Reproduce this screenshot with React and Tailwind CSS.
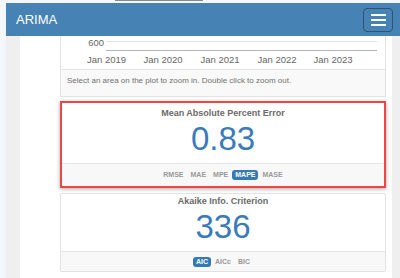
import { useState } from "react";

const years = [
  { x: 45.5, label: "Jan 2019" },
  { x: 102, label: "Jan 2020" },
  { x: 159, label: "Jan 2021" },
  { x: 216, label: "Jan 2022" },
  { x: 272, label: "Jan 2023" },
];

function Toggle({ items, active, onPick }) {
  return (
    <div className="flex items-center justify-center gap-[1px]">
      {items.map((it) => (
        <button
          key={it}
          onClick={() => onPick(it)}
          className={
            it === active
              ? "h-[10px] rounded-[3px] bg-[#337ab7] px-[3px] text-[7px] font-bold leading-[10px] text-white"
              : "h-[10px] rounded-[3px] px-[3px] text-[7px] font-bold leading-[10px] text-[#999]"
          }
        >
          {it}
        </button>
      ))}
    </div>
  );
}

function StatCard({ title, value, items, active, onPick, highlight }) {
  return (
    <div
      className={
        highlight
          ? "flex flex-col border-2 border-[#f04545] bg-white shadow-[0_1px_4px_rgba(0,0,0,0.35)]"
          : "flex flex-col rounded-[2px] border border-[#e2e2e2] bg-white"
      }
    >
      <div className={highlight ? "pt-[5px] text-center" : "pt-[2px] text-center"}>
        <div className="text-[9px] font-bold leading-[10px] text-[#6a6a6a]">{title}</div>
        <div className="text-[33px] leading-[42px] text-[#3a7cbb]">{value}</div>
      </div>
      <div
        className={
          highlight
            ? "mt-[3px] flex h-[23px] items-center justify-center border-t border-[#e6e6e6] bg-[#f8f8f8]"
            : "mt-[3px] flex h-[20px] items-center justify-center border-t border-[#e6e6e6] bg-[#f8f8f8]"
        }
      >
        <Toggle items={items} active={active} onPick={onPick} />
      </div>
    </div>
  );
}

export default function App() {
  const [err, setErr] = useState("MAPE");
  const [ic, setIc] = useState("AIC");

  return (
    <div
      className="flex h-[278px] w-[400px] overflow-hidden bg-[#f3f6fa]"
      style={{ fontFamily: '"Liberation Sans", Arial, sans-serif' }}
    >
      <div className="w-[6px] shrink-0" />
      <div className="flex min-w-0 flex-1 flex-col">
        <div className="h-[3px] shrink-0">
          <div className="ml-[109px] h-[1px] w-[88px] bg-[#8a8a8a]" />
        </div>

        <nav className="flex h-[33px] shrink-0 items-center justify-between bg-[#4682b4] pl-[10px] pr-[7px]">
          <span className="text-[13px] text-white">ARIMA</span>
          <button className="flex h-[24px] w-[30px] flex-col items-center justify-center gap-[3px] rounded-[4px] border border-[#2e5377]">
            <span className="h-[2px] w-[15px] bg-white" />
            <span className="h-[2px] w-[15px] bg-white" />
            <span className="h-[2px] w-[15px] bg-white" />
          </button>
        </nav>

        <div className="flex flex-1 bg-[#efefef] pl-[14px] pr-[8px]">
          <div className="flex flex-1 flex-col bg-white pl-[40px] pr-[6px]">
            <div className="mb-[4px] border-x border-b border-[#e2e2e2] bg-white">
              <svg width="324" height="33" className="block">
                <line x1="45" y1="5.5" x2="316" y2="5.5" stroke="#e2e2e2" />
                <line x1="45" y1="14.5" x2="316" y2="14.5" stroke="#b5b5b5" />
                <text x="43" y="10" textAnchor="end" fontSize="9.5" fill="#666">600</text>
                {years.map((y) => (
                  <text key={y.label} x={y.x} y="26.5" textAnchor="middle" fontSize="9.5" fill="#666">
                    {y.label}
                  </text>
                ))}
              </svg>
              <div className="h-[27px] border-t border-[#e6e6e6] bg-[#f9f9f9] px-[6px] pt-[6px] text-[8px] leading-[10px] text-[#707070]">
                Select an area on the plot to zoom in. Double click to zoom out.
              </div>
            </div>

            <div className="mb-[5px]">
              <StatCard
                highlight
                title="Mean Absolute Percent Error"
                value="0.83"
                items={["RMSE", "MAE", "MPE", "MAPE", "MASE"]}
                active={err}
                onPick={setErr}
              />
            </div>

            <StatCard
              title="Akaike Info. Criterion"
              value="336"
              items={["AIC", "AICc", "BIC"]}
              active={ic}
              onPick={setIc}
            />
          </div>
        </div>
      </div>
    </div>
  );
}
